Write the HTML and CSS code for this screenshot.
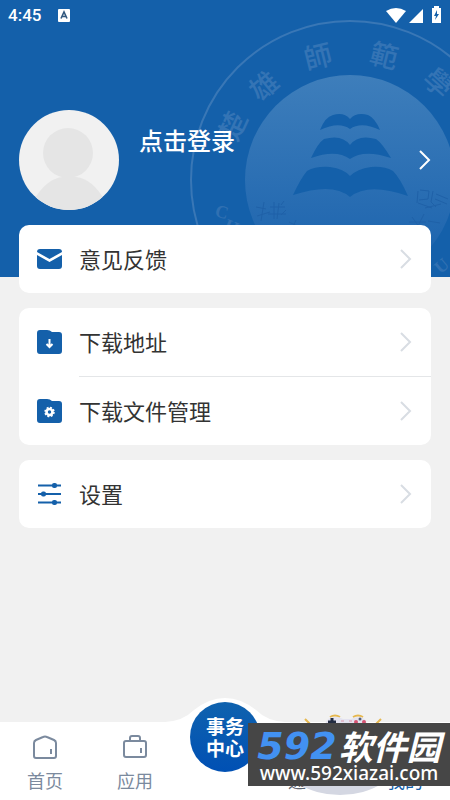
FILE: index.html
```html
<!DOCTYPE html>
<html lang="zh-CN">
<head>
    <meta charset="UTF-8">
    <meta name="viewport" content="width=device-width, initial-scale=1.0">
    <title>我的</title>
    <link rel="stylesheet" href="styles.css">
</head>
<body>

<header class="hero">
    <svg class="seal" width="320" height="320" viewBox="0 0 320 320" aria-hidden="true">
        <defs>
            <linearGradient id="sealFill" x1="0" y1="0" x2="0" y2="1">
                <stop offset="0" stop-color="#3e7ebb"/>
                <stop offset="0.75" stop-color="#2268b0"/>
                <stop offset="1" stop-color="#1460aa"/>
            </linearGradient>
        </defs>
        <circle cx="160" cy="160" r="159" fill="none" stroke="#3977b6" stroke-width="2"/>
        <circle cx="160" cy="160" r="105" fill="url(#sealFill)"/>
        <g class="seal-name">
            <text transform="translate(43 106) rotate(-65)" y="10">楚</text>
            <text transform="translate(74 66) rotate(-40)" y="10">雄</text>
            <text transform="translate(128 37) rotate(-14)" y="10">師</text>
            <text transform="translate(194 36) rotate(14)" y="10">範</text>
            <text transform="translate(248 63) rotate(42)" y="10">學</text>
        </g>
        <g class="seal-latin">
            <text transform="translate(32 191) rotate(15)" y="7">C</text>
            <text transform="translate(42 206) rotate(22)" y="7">H</text>
            <text transform="translate(251 245) rotate(-40)" y="7">U</text>
        </g>
        <g fill="#1460aa">
            <path d="M130 110 Q135 97 143 95 Q154 92 160 99 Q166 92 178 95 Q185 98 190 110 Q171 101 160 109 Q149 101 130 110z"/>
            <path d="M121 138 Q128 123 134 119 Q152 114 160 125 Q168 114 186 119 Q192 123 201 138 Q174 129 160 139 Q146 129 121 138z"/>
            <path d="M103 175 Q111 158 117 151 Q126 146 140 147 Q154 149 160 156 Q167 149 181 147 Q194 146 203 151 Q210 158 218 176 Q178 162 160 177 Q143 162 103 175z"/>
        </g>
        <g fill="none" stroke="#1f61a8" stroke-width="1">
            <path d="M66 187l10 2M67 196l13-4M74 182l-3 19M80 187h15M78 194h18M84 182v17M89 183l-2 16M91 185l3-4M96 190l-5 5"/>
            <path d="M228 171l-1 12M230 170l9 1-1 8-9 1M228 183l14 5M243 171l-2 11 5 5M246 174l12 5M245 179l12 5M235 188l16-4"/>
            <path d="M222 197l8 11M234 194l-7 14M219 202h17M238 201l12 2M99 202l10 5M106 200l-4 9"/>
        </g>
    </svg>

    <div class="status">
        <span class="clock">4:45</span>
        <svg width="12" height="13" viewBox="0 0 12 13" aria-hidden="true">
            <rect width="12" height="13" rx="1" fill="#fff"/>
            <path d="M3 9.500L6 3l3 6.500M4 7.500h4" fill="none" stroke="#33597f" stroke-width="1.600"/>
        </svg>
        <svg class="signals" width="56" height="18" viewBox="0 0 56 18" fill="#fff" aria-hidden="true">
            <path d="M0 5Q10-1 20 5L10 17z"/>
            <path d="M37 3v14H23z"/>
            <path d="M48 2V0h5v2h2v15h-9V2z"/>
            <path d="M51 4l-3 6h2l-1 4 4-6h-2z" fill="#1460aa"/>
        </svg>
    </div>

    <a class="profile" href="#login">
        <svg class="avatar" width="100" height="100" viewBox="0 0 100 100" aria-hidden="true">
            <defs>
                <clipPath id="avatarClip"><circle cx="50" cy="50" r="50"/></clipPath>
            </defs>
            <g clip-path="url(#avatarClip)">
                <rect width="100" height="100" fill="#f1f1f1"/>
                <circle cx="49" cy="43" r="25" fill="#e5e5e5"/>
                <path d="M14 91Q28 68 44 67H57Q74 69 86 91V100H14z" fill="#e5e5e5"/>
            </g>
        </svg>
        <span class="login">点击登录</span>
        <svg class="arrow" width="14" height="22" viewBox="0 0 14 22"><path d="M2 2l9 9-9 9"/></svg>
    </a>
</header>

<main class="menu">
    <section class="card">
        <a class="row" href="#feedback">
            <svg width="25" height="20" viewBox="0 0 25 20" aria-hidden="true">
                <path d="M3 0H22Q25 0 25 3L12.500 10 0 3Q0 0 3 0zM0 6l12.500 7L25 6v11q0 3-3 3H3q-3 0-3-3z" fill="#1460aa"/>
            </svg>
            <span class="label">意见反馈</span>
            <svg class="arrow" width="14" height="22" viewBox="0 0 14 22"><path d="M2 2l9 9-9 9"/></svg>
        </a>
    </section>

    <section class="card">
        <a class="row" href="#download">
            <svg width="25" height="24" viewBox="0 0 25 24" aria-hidden="true">
                <path d="M3 0H10Q13 0 15 2H22Q25 2 25 5V21Q25 24 22 24H3Q0 24 0 21V3Q0 0 3 0z" fill="#1460aa"/>
                <path d="M12.500 9v8M9.500 14l3 3 3-3" fill="none" stroke="#fff" stroke-width="2"/>
            </svg>
            <span class="label">下载地址</span>
            <svg class="arrow" width="14" height="22" viewBox="0 0 14 22"><path d="M2 2l9 9-9 9"/></svg>
        </a>
        <a class="row" href="#files">
            <svg width="25" height="24" viewBox="0 0 25 24" aria-hidden="true">
                <path d="M3 0H10Q13 0 15 2H22Q25 2 25 5V21Q25 24 22 24H3Q0 24 0 21V3Q0 0 3 0z" fill="#1460aa"/>
                <circle cx="12.500" cy="13" r="3" fill="none" stroke="#fff" stroke-width="2.600"/>
                <circle cx="12.500" cy="13" r="4.500" fill="none" stroke="#fff" stroke-width="1.500" stroke-dasharray="2 1.530"/>
            </svg>
            <span class="label">下载文件管理</span>
            <svg class="arrow" width="14" height="22" viewBox="0 0 14 22"><path d="M2 2l9 9-9 9"/></svg>
        </a>
    </section>

    <section class="card">
        <a class="row" href="#settings">
            <svg width="25" height="24" viewBox="0 0 25 24" aria-hidden="true">
                <path d="M1 3.500H24M1 12H24M1 20.500H24" stroke="#1460aa" stroke-width="2"/>
                <g fill="#1460aa">
                    <rect x="15" y="1" width="5" height="5" rx="2"/>
                    <rect x="4" y="9.500" width="5" height="5" rx="2"/>
                    <rect x="15" y="18" width="5" height="5" rx="2"/>
                </g>
            </svg>
            <span class="label">设置</span>
            <svg class="arrow" width="14" height="22" viewBox="0 0 14 22"><path d="M2 2l9 9-9 9"/></svg>
        </a>
    </section>
</main>

<nav class="tabs">
    <svg class="bump" width="120" height="26" viewBox="0 0 120 26" aria-hidden="true">
        <path d="M0 26V25Q18 24 29 13Q44 1 60 1Q76 1 91 13Q102 24 120 25V26z" fill="#fff"/>
    </svg>
    <a class="tab" href="#home">
        <svg width="26" height="26" viewBox="0 0 26 26" aria-hidden="true">
            <path d="M2 9Q2 7 4 6L11 3Q13 2 15 3L22 6Q24 7 24 9V22Q24 24 22 24H4Q2 24 2 22zM19 15v5"/>
        </svg>
        <span>首页</span>
    </a>
    <a class="tab" href="#apps">
        <svg width="26" height="26" viewBox="0 0 26 26" aria-hidden="true">
            <path d="M4 7H22Q24 7 24 9V21Q24 23 22 23H4Q2 23 2 21V9Q2 7 4 7zM8 7V4Q8 2 10 2H16Q18 2 18 4V7M19 14v5"/>
        </svg>
        <span>应用</span>
    </a>
    <div class="tab">
        <button class="center" type="button">事务<br>中心</button>
    </div>
    <a class="tab dark" href="#contacts">
        <svg width="26" height="26" viewBox="0 0 26 26" aria-hidden="true">
            <path d="M4 3H22V23H4zM9 9h8M9 15h8"/>
        </svg>
        <span>通讯录</span>
    </a>
    <a class="tab active" href="#mine">
        <svg width="26" height="26" viewBox="0 0 26 26" aria-hidden="true">
            <circle cx="13" cy="8" r="5"/><path d="M3 24Q4 15 13 15Q22 15 23 24z"/>
        </svg>
        <span>我的</span>
    </a>

    <div class="sponsor">
        <svg class="gamepad" width="120" height="84" viewBox="0 0 120 84" aria-hidden="true">
            <ellipse cx="55" cy="42" rx="60" ry="40" fill="#d4d7e2" clip-path="inset(30px 0 0 0)"/>
            <path d="M20 6l5 5M22 12l3-1M96 6l-5 5M94 12l-3-1" stroke="#e6b84f" stroke-width="2" fill="none"/>
            <path d="M45 4q5-3 10 0M68 4q5-3 10 0" stroke="#e6b84f" stroke-width="2" fill="none"/>
            <path d="M40 12Q42 4 50 4Q55 4 58 6H66Q70 4 75 4Q81 5 82 12z" fill="#e4e3f0"/>
            <path d="M43 9h8M47 5v7" stroke="#222c42" stroke-width="3"/>
            <path d="M56 8h3M64 8h3" stroke="#dc96aa" stroke-width="1"/>
            <circle cx="71" cy="9" r="2" fill="#d65372"/>
            <circle cx="79" cy="9" r="2" fill="#d65372"/>
            <circle cx="75" cy="6" r="1.500" fill="#566078"/>
        </svg>
        <div class="banner">
            <div class="brand"><span class="digits">592</span><span>软件园</span></div>
            <div class="site">www.592xiazai.com</div>
        </div>
    </div>
</nav>

</body>
</html>
```
FILE: styles.css
```css
* {
    box-sizing: border-box;
}
body {
    margin: 0;
    min-height: 100vh;
    display: flex;
    flex-direction: column;
    background: #f1f1f1;
    color: #333;
    font-family: "Noto Sans CJK SC", sans-serif;
}
a {
    color: inherit;
    text-decoration: none;
}
svg {
    flex: none;
}

/* header */
.hero {
    position: relative;
    overflow: hidden;
    padding-bottom: 67px;
    background: #1460aa;
    color: #fff;
}
.seal {
    position: absolute;
    top: 20px;
    right: -60px;
}
.seal-name {
    fill: #3474b5;
    font-family: "Noto Sans CJK TC", sans-serif;
    font-size: 28px;
    font-weight: 500;
    text-anchor: middle;
}
.seal-latin {
    fill: #3070b2;
    font-family: "Liberation Serif", serif;
    font-size: 18px;
    font-weight: bold;
    text-anchor: middle;
}
.status {
    position: relative;
    display: flex;
    align-items: center;
    gap: 17px;
    height: 30px;
    padding: 0 8px;
}
.clock {
    font-family: Roboto, sans-serif;
    font-size: 17px;
    font-weight: 500;
}
.signals {
    margin-left: auto;
}
.profile {
    position: relative;
    display: flex;
    align-items: center;
    gap: 20px;
    margin-top: 80px;
    padding: 0 18px 0 19px;
}
.login {
    align-self: flex-start;
    flex: 1;
    margin-top: 12px;
    font-size: 24px;
    line-height: 36px;
    font-weight: 500;
}
.arrow {
    fill: none;
    stroke: #d8dde3;
    stroke-width: 2;
}
.profile .arrow {
    stroke: #fff;
}

/* menu cards */
.menu {
    position: relative;
    flex: 1;
    display: flex;
    flex-direction: column;
    gap: 15px;
    margin-top: -52px;
    padding: 0 19px 20px;
}
.card {
    border-radius: 10px;
    background: #fff;
}
.row {
    display: flex;
    align-items: center;
    gap: 17px;
    height: 68px;
    padding: 0 18px;
}
.row + .row {
    position: relative;
    height: 69px;
}
.row + .row::before {
    content: "";
    position: absolute;
    top: 0;
    left: 60px;
    right: 0;
    height: 1px;
    background: #e4e6e8;
}
.label {
    flex: 1;
    padding-bottom: 2px;
    font-size: 22px;
}

/* bottom tabs */
.tabs {
    position: relative;
    display: grid;
    grid-template-columns: repeat(5, 1fr);
    height: 78px;
    background: #fff;
    color: #7b8a9e;
    font-size: 18px;
    line-height: 24px;
}
.bump {
    position: absolute;
    top: -25px;
    left: 50%;
    margin-left: -60px;
}
.tab {
    display: flex;
    flex-direction: column;
    align-items: center;
    gap: 8px;
    padding-top: 12px;
}
.tab svg {
    fill: none;
    stroke: currentColor;
    stroke-width: 2;
}
.tab.dark {
    color: #5c6470;
}
.tab.active {
    color: #1460aa;
}
.center {
    position: relative;
    flex: none;
    width: 70px;
    height: 70px;
    margin-top: -32px;
    padding: 0;
    border: none;
    border-radius: 50%;
    background: linear-gradient(#0f62ae, #0050b4);
    color: #fff;
    font-family: inherit;
    font-size: 19px;
    font-weight: bold;
    line-height: 22px;
}

/* sponsor banner over the tabs */
.sponsor {
    position: absolute;
    right: 0;
    bottom: 14px;
}
.gamepad {
    position: absolute;
    top: -10px;
    left: 37px;
}
.banner {
    position: relative;
    width: 202px;
    height: 63px;
    padding-top: 7px;
    background: #464646;
    color: #fff;
    text-align: center;
}
.brand {
    display: flex;
    align-items: center;
    justify-content: center;
    gap: 2px;
    height: 32px;
    font-size: 34px;
    font-style: italic;
    font-weight: bold;
    line-height: 32px;
}
.digits {
    color: #4291f2;
    font-family: "DejaVu Sans", sans-serif;
    font-size: 38px;
}
.site {
    font-family: "Noto Sans", sans-serif;
    font-size: 19px;
    font-weight: 500;
    line-height: 22px;
}
```
